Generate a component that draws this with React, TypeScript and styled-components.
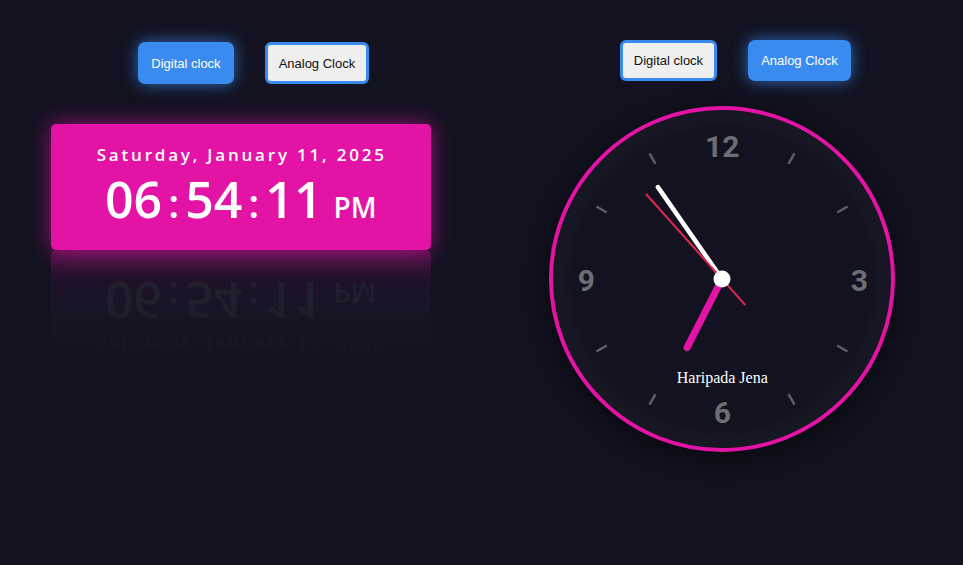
import React from 'react';
import styled, { createGlobalStyle } from 'styled-components';

const PINK = '#e313a5';
const BLUE = '#3a8bef';

const GlobalStyle = createGlobalStyle`
  html, body {
    margin: 0;
    padding: 0;
    background: #121220;
  }
  #root {
    min-height: 565px;
  }
`;

const Page = styled.div`
  display: flex;
  width: 963px;
  height: 565px;
  overflow: hidden;
  background: #121220;
`;

const Panel = styled.section<{ $top: number; $gap: number }>`
  flex: 1;
  display: flex;
  flex-direction: column;
  align-items: center;
  padding-top: ${(p) => p.$top}px;
  gap: ${(p) => p.$gap}px;
`;

const ButtonRow = styled.div<{ $h: number }>`
  display: flex;
  gap: 31px;
  padding-left: 26px;
  height: ${(p) => p.$h}px;
`;

const ToggleBtn = styled.button<{ $active?: boolean }>`
  font-family: 'Liberation Sans', Arial, sans-serif;
  font-size: 13px;
  height: 100%;
  padding: 0 11px;
  border-radius: ${(p) => (p.$active ? '7px' : '6px')};
  cursor: pointer;
  ${(p) =>
    p.$active
      ? `
    background: ${BLUE};
    color: #fff;
    border: none;
    padding: 0 13px;
    box-shadow: 0 0 16px rgba(58, 139, 239, 0.75);
  `
      : `
    background: #efefef;
    color: #111;
    border: 3px solid ${BLUE};
  `}
`;

/* ---------- digital ---------- */

const DigitalWrap = styled.div`
  display: flex;
  flex-direction: column;
  width: 380px;
`;

const DigitalBox = styled.div`
  position: relative;
  z-index: 2;
  height: 126px;
  box-sizing: border-box;
  background: ${PINK};
  border-radius: 5px;
  box-shadow: 0 0 22px rgba(227, 19, 165, 0.65);
  display: flex;
  flex-direction: column;
  align-items: center;
  justify-content: flex-start;
  padding-top: 20px;
  color: #fff;
  font-family: 'Open Sans', sans-serif;
`;

const Reflection = styled(DigitalBox)`
  z-index: 1;
  transform: scaleY(-1);
  background: linear-gradient(
    to top,
    rgba(227, 19, 165, 0.3) 0%,
    rgba(120, 20, 110, 0.12) 25%,
    rgba(255, 255, 255, 0.02) 60%,
    rgba(255, 255, 255, 0.015) 100%
  );
  box-shadow: none;
  color: rgba(34, 34, 46, 0.85);
  -webkit-mask-image: linear-gradient(to top, #000 45%, transparent 100%);
  mask-image: linear-gradient(to top, #000 45%, transparent 100%);
`;

const DateLine = styled.div`
  font-size: 17px;
  font-weight: 600;
  letter-spacing: 2.8px;
  line-height: 22px;
  margin-left: 2px;
`;

const TimeLine = styled.div`
  display: flex;
  align-items: baseline;
  line-height: 50px;
  margin-top: 8px;
`;

const Digits = styled.span`
  font-size: 50px;
  font-weight: 600;
`;

const Colon = styled.span`
  font-size: 40px;
  font-weight: 600;
  margin: 0 6px;
`;

const Meridiem = styled.span`
  font-size: 28px;
  font-weight: 600;
  margin-left: 11px;
`;

function DigitalFace({ flipped }: { flipped?: boolean }) {
  const Box = flipped ? Reflection : DigitalBox;
  return (
    <Box aria-hidden={flipped}>
      <DateLine>Saturday, January 11, 2025</DateLine>
      <TimeLine>
        <Digits>06</Digits>
        <Colon>:</Colon>
        <Digits>54</Digits>
        <Colon>:</Colon>
        <Digits>11</Digits>
        <Meridiem>PM</Meridiem>
      </TimeLine>
    </Box>
  );
}

/* ---------- analog ---------- */

const Face = styled.div`
  position: relative;
  width: 346px;
  height: 346px;
  box-sizing: border-box;
  border-radius: 50%;
  border: 4px solid ${PINK};
  background: #121220;
  box-shadow: 0 6px 26px rgba(0, 0, 0, 0.55),
    inset 0 0 28px rgba(255, 255, 255, 0.09),
    inset 0 0 8px rgba(0, 0, 0, 0.6);
`;

const Dial = styled.svg`
  position: absolute;
  inset: 0;
`;

const Numeral = styled.div`
  position: absolute;
  transform: translate(-50%, -50%);
  font-family: Roboto, 'Liberation Sans', sans-serif;
  font-weight: 700;
  font-size: 30px;
  color: #6d6d74;
`;

const Signature = styled.div`
  position: absolute;
  left: 50%;
  top: 268px;
  transform: translate(-50%, -50%);
  font-family: 'Liberation Serif', 'Times New Roman', serif;
  font-size: 16px;
  color: #fff;
  white-space: nowrap;
`;

const C = 169;

const polar = (deg: number, r: number) => {
  const a = (deg * Math.PI) / 180;
  return { x: C + r * Math.sin(a), y: C - r * Math.cos(a) };
};

const numerals = [
  { n: '12', dx: 0, dy: -133 },
  { n: '3', dx: 137, dy: 1 },
  { n: '6', dx: 0, dy: 133 },
  { n: '9', dx: -136, dy: 1 },
];

function AnalogFace() {
  const ticks = [1, 2, 4, 5, 7, 8, 10, 11];
  const hourA = 207;
  const minA = 325.1;
  const secA = 318.2;
  const hTip = polar(hourA, 77);
  const mTip = polar(minA, 112);
  const sTip = polar(secA, 114);
  const sTail = polar(secA + 180, 35);

  return (
    <Face>
      {numerals.map((d) => (
        <Numeral key={d.n} style={{ left: C + d.dx, top: C + d.dy }}>
          {d.n}
        </Numeral>
      ))}
      <Signature>Haripada Jena</Signature>
      <Dial width="338" height="338" viewBox="0 0 338 338">
        {ticks.map((t) => {
          const a = polar(t * 30, 133);
          const b = polar(t * 30, 145);
          return (
            <line key={t} x1={a.x} y1={a.y} x2={b.x} y2={b.y} stroke="#5e5e66" strokeWidth="2.5" />
          );
        })}
        <line x1={C} y1={C} x2={hTip.x} y2={hTip.y} stroke={PINK} strokeWidth="7" strokeLinecap="round" />
        <line x1={C} y1={C} x2={mTip.x} y2={mTip.y} stroke="#fff" strokeWidth="4.5" strokeLinecap="round" />
        <line x1={sTail.x} y1={sTail.y} x2={sTip.x} y2={sTip.y} stroke="#e0264e" strokeWidth="2" />
        <circle cx={C} cy={C} r="8.5" fill="#fff" />
      </Dial>
    </Face>
  );
}

export default function App() {
  return (
    <>
      <GlobalStyle />
      <Page>
        <Panel $top={42} $gap={40}>
          <ButtonRow $h={42}>
            <ToggleBtn $active>Digital clock</ToggleBtn>
            <ToggleBtn>Analog Clock</ToggleBtn>
          </ButtonRow>
          <DigitalWrap>
            <DigitalFace />
            <DigitalFace flipped />
          </DigitalWrap>
        </Panel>
        <Panel $top={40} $gap={25}>
          <ButtonRow $h={41}>
            <ToggleBtn>Digital clock</ToggleBtn>
            <ToggleBtn $active>Analog Clock</ToggleBtn>
          </ButtonRow>
          <AnalogFace />
        </Panel>
      </Page>
    </>
  );
}
